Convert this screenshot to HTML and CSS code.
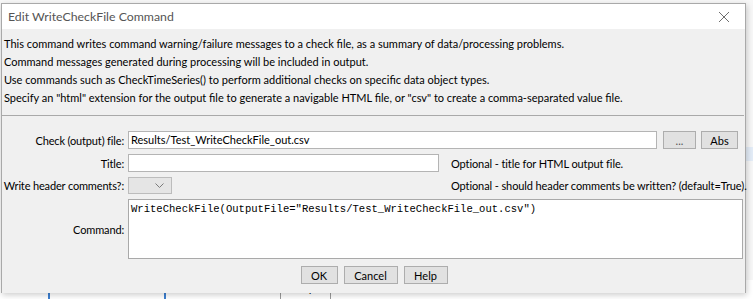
FILE: index.html
```html
<!DOCTYPE html>
<html lang="en">
<head>
  <meta charset="UTF-8">
  <title>Edit WriteCheckFile Command</title>
  <link rel="stylesheet" href="styles.css">
</head>
<body>
  <div class="app">
    <div class="app-main">
      <div class="side-strip"></div>
    </div>
    <div class="status-row">
      <div class="status-cell status-lead"></div>
      <div class="status-cell progress">0%</div>
      <div class="status-cell progress">0%</div>
      <div class="status-cell status-text">Ready</div>
    </div>
  </div>

  <div class="dialog">
    <div class="dialog-titlebar">
      <span class="dialog-title">Edit WriteCheckFile Command</span>
      <svg class="close-icon" width="12" height="12" viewBox="0 0 12 12">
        <path d="M1 1 L11 11 M11 1 L1 11" stroke="#6f6f6f" stroke-width="1" fill="none"/>
      </svg>
    </div>

    <div class="dialog-body">
      <div class="description">
        <p>This command writes command warning/failure messages to a check file, as a summary of data/processing problems.</p>
        <p>Command messages generated during processing will be included in output.</p>
        <p>Use commands such as CheckTimeSeries() to perform additional checks on specific data object types.</p>
        <p>Specify an "html" extension for the output file to generate a navigable HTML file, or "csv" to create a comma-separated value file.</p>
      </div>

      <div class="separator"></div>

      <div class="form-grid">
        <div class="field-label">Check (output) file:</div>
        <div class="row-fields">
          <div class="text-field field-file">Results/Test_WriteCheckFile_out.csv</div>
          <button class="btn btn-browse">...</button>
          <button class="btn btn-abs">Abs</button>
        </div>

        <div class="field-label">Title:</div>
        <div class="row-fields">
          <div class="text-field field-title"></div>
          <span class="note">Optional - title for HTML output file.</span>
        </div>

        <div class="field-label">Write header comments?:</div>
        <div class="row-fields">
          <div class="combo">
            <svg class="combo-arrow" width="9" height="6" viewBox="0 0 9 6">
              <path d="M0.5 0.5 L4.5 4.5 L8.5 0.5" stroke="#7a7a7a" stroke-width="1" fill="none"/>
            </svg>
          </div>
          <span class="note note-combo">Optional - should header comments be written? (default=True).</span>
        </div>

        <div class="field-label">Command:</div>
        <div class="command-box">WriteCheckFile(OutputFile="Results/Test_WriteCheckFile_out.csv")</div>
      </div>

      <div class="button-bar">
        <button class="btn btn-ok">OK</button>
        <button class="btn btn-cancel">Cancel</button>
        <button class="btn btn-help">Help</button>
      </div>
    </div>
  </div>
</body>
</html>
```

FILE: styles.css
```css
body {
  margin: 0;
  padding: 0;
  font-family: Lato, "Noto Sans", sans-serif;
  font-size: 11px;
  color: #000;
  background: #f7f7f7;
  overflow: hidden;
}
.app {
  width: 753px;
  height: 299px;
  display: flex;
  flex-direction: column;
}
.app-main {
  height: 290px;
  display: flex;
  justify-content: flex-end;
}
.side-strip {
  width: 8px;
  height: 14px;
  margin-top: 147px;
  background: #e3ecf7;
}
.status-row {
  display: flex;
  height: 20px;
  background: #fff;
}
.status-cell {
  font-size: 11px;
  padding-top: 1px;
}
.status-lead {
  width: 48px;
}
.progress {
  width: 114px;
  border-left: 2px solid #3c7fd0;
  color: #4a8ad8;
  text-align: center;
}
.status-text {
  width: 46px;
  border-left: 1px solid #9a9a9a;
  border-right: 1px solid #9a9a9a;
  padding-left: 3px;
}

/* Dialog window */
.dialog {
  position: absolute;
  left: 1px;
  top: 3px;
  width: 743px;
  height: 289px;
  border: 1px solid #a9a9a9;
  border-bottom: none;
  background: #f0f0f0;
  box-shadow: 1px 2px 6px rgba(0, 0, 0, 0.2);
  display: flex;
  flex-direction: column;
}
.dialog-titlebar {
  height: 25px;
  background: #fff;
  display: flex;
  align-items: center;
  justify-content: space-between;
  padding: 0 15px 0 6px;
}
.dialog-title {
  font-size: 12.3px;
  color: #555;
}
.close-icon {
  display: block;
}
.dialog-body {
  flex: 1;
  padding: 6px 1px 0 1px;
}
.description p {
  margin: 0;
  line-height: 18px;
  padding-left: 1px;
  white-space: nowrap;
}
.separator {
  height: 0;
  border-top: 1px solid #a9a9a9;
  margin: 8px 0 15px -1px;
}

/* Form */
.form-grid {
  display: grid;
  grid-template-columns: 121px 1fr;
  grid-template-rows: 18px 18px 17px 60px;
  column-gap: 4px;
  row-gap: 5px;
}
.field-label {
  display: flex;
  align-items: center;
  justify-content: flex-end;
  white-space: nowrap;
  letter-spacing: -0.15px;
}
.row-fields {
  display: flex;
  align-items: center;
  white-space: nowrap;
}
.text-field {
  box-sizing: border-box;
  height: 100%;
  background: #fff;
  border: 1px solid #b4b4b4;
  padding: 0 2px;
  line-height: 16px;
}
.field-file {
  width: 529px;
}
.field-title {
  width: 311px;
}
.note {
  margin-left: 12px;
  letter-spacing: -0.1px;
}
.note-combo {
  margin-left: 279px;
}
.combo {
  box-sizing: border-box;
  flex: none;
  width: 44px;
  height: 17px;
  background: #e5e5e5;
  border: 1px solid #bcbcbc;
  display: flex;
  align-items: center;
  justify-content: flex-end;
  padding-right: 7px;
}
.combo-arrow {
  display: block;
}
.command-box {
  box-sizing: border-box;
  width: 615px;
  background: #fff;
  border: 1px solid #a9a9a9;
  padding: 3px 2px;
  font-family: "Liberation Mono", monospace;
  font-size: 10.55px;
  line-height: 13px;
  white-space: pre;
}

/* Buttons */
.btn {
  box-sizing: border-box;
  height: 18px;
  padding: 0;
  margin: 0;
  background: #e1e1e1;
  border: 1px solid #adadad;
  font-family: Lato, "Noto Sans", sans-serif;
  font-size: 11px;
  color: #000;
}
.btn-browse {
  width: 33px;
  margin-left: 6px;
  color: #555;
}
.btn-abs {
  width: 37px;
  margin-left: 5px;
}
.button-bar {
  display: flex;
  justify-content: center;
  gap: 6px;
  margin-top: 7px;
  padding-left: 1px;
}
.btn-ok {
  width: 37px;
}
.btn-cancel {
  width: 54px;
}
.btn-help {
  width: 44px;
}
```
